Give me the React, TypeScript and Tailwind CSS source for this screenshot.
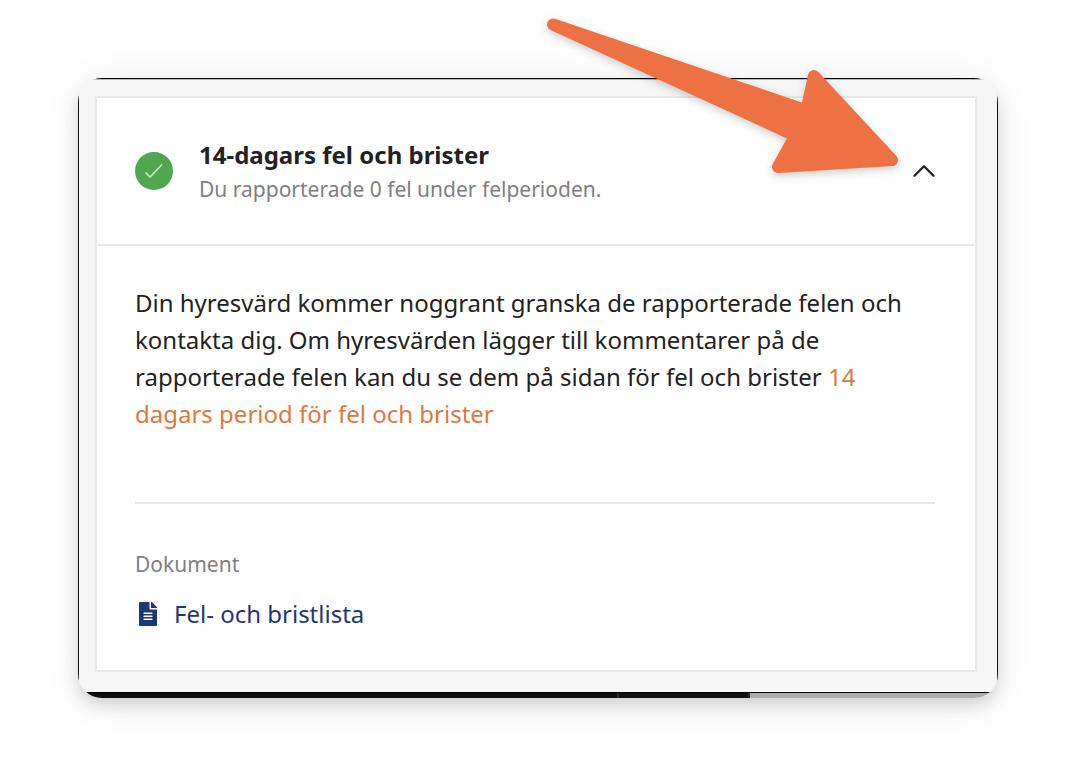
import { ChevronUp } from 'lucide-react'
import React, { memo, useState } from 'react'
import { FaFileAlt } from 'react-icons/fa'

const CheckBadge: React.FC = () => (
  <span className="flex size-[38px] shrink-0 items-center justify-center rounded-full bg-[#4fa84d]">
    <svg width="20" height="18" viewBox="0 0 20 18" fill="none" aria-hidden>
      <path d="M1.5 10.5L6 15L18 2.5" stroke="#cdeacc" strokeWidth="1.6" />
    </svg>
  </span>
)

const PointerArrow: React.FC = () => (
  <svg
    className="pointer-events-none absolute -top-[66px] right-24 overflow-visible drop-shadow-[0_3px_4px_rgba(0,0,0,0.2)]"
    width="360"
    height="170"
    viewBox="0 0 360 170"
    aria-hidden
  >
    <path
      d="M11 12.5L264.4 98.4L272 64L350 148L236 155L253.4 123.7Z"
      fill="#ed7143"
      stroke="#ed7143"
      strokeWidth="12"
      strokeLinejoin="round"
    />
  </svg>
)

const Details: React.FC = () => (
  <div className="border-t-2 border-[#e9e9e9] pr-10 pl-[38px]">
    <p className="border-b-2 border-[#e9e9e9] pt-[38px] pb-[70px] text-2xl leading-[37px] text-[#222]">
      Din hyresvärd kommer noggrant granska de rapporterade felen och kontakta
      dig. Om hyresvärden lägger till kommentarer på de rapporterade felen kan
      du se dem på sidan för fel och brister{' '}
      <a href="#brister" className="text-[#e07840]">
        14 dagars period för fel och brister
      </a>
    </p>
    <div className="pt-11 pb-[38px]">
      <h3 className="text-[21px] leading-8 text-[#808080]">Dokument</h3>
      <a
        href="#dokument"
        className="mt-4 flex items-center gap-[17px] pl-1 text-2xl leading-9 text-[#1e3778]"
      >
        <FaFileAlt className="h-6 w-[18px] shrink-0" />
        Fel- och bristlista
      </a>
    </div>
  </div>
)

const App: React.FC = () => {
  const [open, setOpen] = useState(true)

  return (
    <main className="min-h-screen bg-[#fefefe] p-[78px] font-['Noto_Sans','Open_Sans',sans-serif]">
      <div className="relative">
        <div className="overflow-hidden rounded-3xl bg-[#f6f6f6] shadow-[0_4px_40px_rgba(0,0,0,0.06),0_8px_16px_rgba(0,0,0,0.14)]">
          <div className="h-0.5 border-t border-black bg-[#bbb]"></div>
          <div className="border-x border-[#111] pt-4 pr-5 pb-5 pl-4">
            <section className="border-2 border-[#e9e9e9] bg-white">
              <button
                type="button"
                aria-expanded={open}
                onClick={() => setOpen(!open)}
                className="flex h-[146px] w-full cursor-pointer items-center pr-8 pl-[38px] text-left"
              >
                <CheckBadge />
                <span className="ml-[26px] flex flex-1 flex-col">
                  <span className="text-2xl leading-9 font-bold text-[#222]">
                    14-dagars fel och brister
                  </span>
                  <span className="text-[21px] leading-8 text-[#808080]">
                    Du rapporterade 0 fel under felperioden.
                  </span>
                </span>
                <ChevronUp
                  size={38}
                  strokeWidth={1.5}
                  className={open ? 'text-[#222]' : 'rotate-180 text-[#222]'}
                />
              </button>
              {open && <Details />}
            </section>
          </div>
          <div className="flex h-1.5 border-t border-black">
            <div className="w-[58.8%] border-r-2 border-[#2a2a2a] bg-[#0e0e0e]"></div>
            <div className="w-[14.2%] border-r-2 border-[#2a2a2a] bg-[#0f1012]"></div>
            <div className="flex-1 bg-[#acacac]"></div>
          </div>
        </div>
        <PointerArrow />
      </div>
    </main>
  )
}

export default memo(App)
